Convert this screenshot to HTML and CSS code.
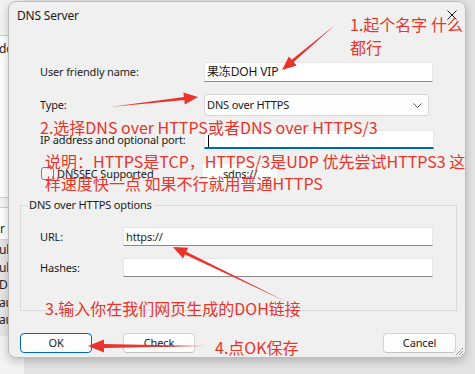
FILE: index.html
```html
<!DOCTYPE html>
<html lang="zh">
<head>
<meta charset="utf-8">
<title>DNS Server</title>
<link rel="stylesheet" href="styles.css">
</head>
<body>
<div class="desk">
  <div class="behind">
    <div class="bh-top"></div>
    <div class="bh-a">dd</div>
    <div class="bh-line"></div>
    <div class="bh-r">r</div>
    <div class="bh-sel">
      <div>ul</div><div>ul</div><div>De</div><div>au</div><div>au</div>
    </div>
    <div class="bh-rest"></div>
  </div>

  <div class="dialog">
    <div class="titlebar">
      <span class="title">DNS Server</span>
      <svg class="close" width="10" height="10" viewBox="0 0 10 10"><path d="M0.5 0.5 L9.5 9.5 M9.5 0.5 L0.5 9.5" stroke="#1a1a1a" stroke-width="1" fill="none"/></svg>
    </div>
    <div class="form">
      <div class="row r1">
        <span class="lbl">User friendly name:</span>
        <div class="input w229">果冻DOH VIP</div>
      </div>
      <div class="row r2">
        <span class="lbl">Type:</span>
        <div class="select">DNS over HTTPS
          <svg class="chev" width="9" height="5" viewBox="0 0 9 5"><path d="M0.5 0.5 L4.5 4.5 L8.5 0.5" stroke="#5a5a5a" stroke-width="1" fill="none"/></svg>
        </div>
      </div>
      <div class="row r3">
        <span class="lbl">IP address and optional port:</span>
        <div class="input w230 focused"><span class="caret"></span></div>
      </div>
      <div class="row r4">
        <span class="lbl check"><span class="box"></span>DNSSEC Supported</span>
        <div class="sdns">sdns://</div>
      </div>
    </div>
    <fieldset class="group">
      <legend>DNS over HTTPS options</legend>
      <div class="grow g1"><span class="lbl">URL:</span><div class="input">https://</div></div>
      <div class="grow g2"><span class="lbl">Hashes:</span><div class="input"></div></div>
    </fieldset>
    <div class="buttons">
      <button class="btn primary">OK</button>
      <button class="btn check-btn">Check</button>
      <button class="btn cancel">Cancel</button>
    </div>
    <svg class="grip" width="10" height="10" viewBox="0 0 10 10"><path d="M9 2 L2 9 M9 5 L5 9 M9 8 L8 9" stroke="#9a9a9a" stroke-width="1" fill="none"/></svg>
  </div>

  <div class="note n1">1.起个名字 什么<br>都行</div>
  <div class="note n2">2.选择DNS over HTTPS或者DNS over HTTPS/3</div>
  <div class="note n3">说明：HTTPS是TCP，HTTPS/3是UDP 优先尝试HTTPS3 这<br>样速度快一点 如果不行就用普通HTTPS</div>
  <div class="note n4">3.输入你在我们网页生成的DOH链接</div>
  <div class="note n5">4.点OK保存</div>

  <svg class="arrows" width="475" height="374" viewBox="0 0 475 374">
    <g fill="#e8342a">
      <polygon points="335,25 293.7,62.1 296.6,65.5 282,70 288.8,56.4 291.7,59.8"/>
      <polygon points="110,107 184.3,100.1 184.8,104.6 198,97 183.4,92.6 183.9,97.1"/>
      <polygon points="287,302 186.3,251.7 188.2,247.7 173,247 183.0,258.5 185.0,254.4"/>
      <polygon points="205,346 104,348 104,352.5 88,346 104,339.5 104,344"/>
    </g>
  </svg>
</div>
</body>
</html>
```

FILE: styles.css
```css
* { box-sizing: border-box; margin: 0; padding: 0; }
html, body { width: 475px; height: 374px; overflow: hidden; }
body {
  background: #e3e3e3;
  font-family: "Noto Sans", "Noto Sans CJK SC", sans-serif;
  font-size: 11px;
  letter-spacing: -0.15px;
  color: #1a1a1a;
}
.desk { position: relative; width: 475px; height: 374px; }

/* window behind the dialog */
.behind {
  position: absolute; left: 0; top: 0; width: 24px; height: 374px;
  display: flex; flex-direction: column; background: #fff;
  font-size: 12px; line-height: 16px; color: #222; overflow: hidden;
}
.bh-top { height: 36px; background: #f3f3f3; border-bottom: 1px solid #cdcdcd; }
.bh-a { height: 161px; padding-top: 5px; margin-left: -1px; }
.bh-line { height: 11px; background: #f6f6f6; border-top: 1px solid #d3d3d3; border-bottom: 1px solid #d3d3d3; }
.bh-r { height: 32px; padding-top: 13px; border-bottom: 1px solid #d9d9d9; }
.bh-sel { height: 96px; background: #e6e6e6; padding-top: 1px; }
.bh-sel div { height: 17.5px; line-height: 17px; margin-left: -1px; }
.bh-rest { flex: 1; background: #f3f3f3; }

/* dialog */
.dialog {
  position: absolute; left: 8px; top: 1px; width: 458px; height: 357px;
  background: #f0f0f0; border: 1px solid #bdbdbd; border-radius: 8px;
  box-shadow: 0 3px 10px rgba(0,0,0,0.22);
  display: flex; flex-direction: column;
}
.titlebar {
  height: 30px; display: flex; align-items: center; justify-content: space-between;
  padding: 0 8px 2px 8px;
}
.title { font-size: 12px; line-height: 16px; letter-spacing: -0.2px; }
.close { margin-top: -3px; }

.form { padding-left: 31px; display: flex; flex-direction: column; }
.row { display: grid; grid-template-columns: 164px auto; align-items: center; }
.r1 { margin-top: 30px; height: 20px; }
.r2 { margin-top: 12px; height: 22px; }
.r3 { margin-top: 14px; height: 19px; }
.r4 { margin-top: 15px; height: 19px; }
.lbl { line-height: 16px; white-space: nowrap; }

.input {
  height: 19px; background: #fff; border: 1px solid #e6e6e6; border-bottom-color: #8a8a8a;
  padding-left: 2px; line-height: 17px;
  white-space: nowrap; position: relative;
}
.r1 .input { height: 20px; line-height: 18px; font-size: 12px; }
.w229 { width: 229px; }
.w230 { width: 230px; }
.focused { border-bottom: 2px solid #0067c0; }
.caret { display: inline-block; width: 1px; height: 12px; background: #000; margin-left: 1px; vertical-align: middle; }

.select {
  width: 225px; height: 22px; background: #fdfdfd; border: 1px solid #d6d6d6; border-radius: 3px;
  padding-left: 2px; line-height: 20px; display: flex; justify-content: space-between; align-items: center;
  padding-right: 6px;
}
.check { display: flex; align-items: center; margin-left: 1px; }
.box {
  width: 13px; height: 13px; border: 1px solid #7c7c7c; border-radius: 3px; background: #f4f4f4;
  margin-right: 3px;
}
.sdns {
  width: 74px; height: 19px; margin-left: -1px; background: #fff; text-align: center; line-height: 19px;
}

/* group box */
.group {
  margin: 14px 8px 0 11px; border: 1px solid #dadada; border-radius: 0;
  padding: 0 23px 33px 19px; min-width: 0;
}
.group legend { margin-left: -13px; padding: 0 2px; line-height: 16px; }
.grow { display: grid; grid-template-columns: 83px 1fr; align-items: center; height: 19px; }
.g1 { margin-top: 14px; }
.g2 { margin-top: 12px; }

/* buttons */
.buttons { display: flex; margin-top: 22px; padding: 0 9px 0 11px; height: 20px; }
.btn {
  width: 72px; height: 20px; background: #fdfdfd; border: 1px solid #d3d3d3; border-bottom-color: #c2c2c2;
  border-radius: 4px; font-family: "Noto Sans", sans-serif; font-size: 11px; letter-spacing: -0.15px;
  color: #1a1a1a; line-height: 16px;
}
.primary { border: 1px solid #0067c0; }
.check-btn { margin-left: 31px; }
.cancel { margin-left: auto; width: 73px; }
.grip { position: absolute; right: 1px; bottom: 1px; }

/* annotations */
.note {
  position: absolute; color: #e8342a; font-family: "Noto Sans CJK SC", sans-serif;
  font-size: 16px; line-height: 22px; letter-spacing: 0; white-space: nowrap; z-index: 5;
}
.n1 { left: 350px; top: 13px; line-height: 23px; }
.n2 { left: 40px; top: 116px; }
.n3 { left: 45px; top: 150px; }
.n4 { left: 45px; top: 297px; }
.n5 { left: 215px; top: 336px; }
.arrows { position: absolute; left: 0; top: 0; z-index: 6; pointer-events: none; }
```
